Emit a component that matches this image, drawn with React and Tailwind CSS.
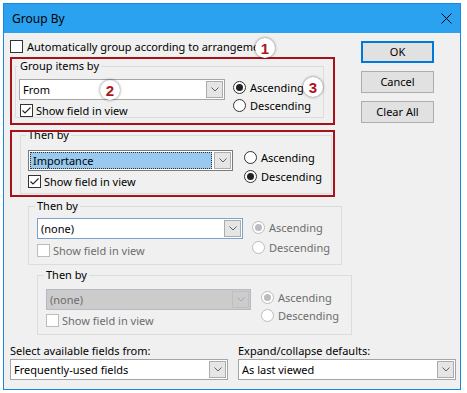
import React from "react";

const FONT = { fontFamily: '"Noto Sans", "Open Sans", sans-serif' };

function Check({ checked, disabled }) {
  return (
    <span
      className={`w-[13px] h-[13px] shrink-0 border bg-white flex items-center justify-center ${
        disabled ? "border-[#bcbcbc]" : "border-[#333333]"
      }`}
    >
      {checked && (
        <svg width="11" height="11" viewBox="0 0 11 11">
          <path d="M1.5 5.5 L4 8 L9.5 2.5" fill="none" stroke="#222222" strokeWidth="1.1" />
        </svg>
      )}
    </span>
  );
}

function Radio({ checked, disabled }) {
  return (
    <span
      className={`w-[13px] h-[13px] shrink-0 rounded-full border bg-white flex items-center justify-center ${
        disabled ? "border-[#bcbcbc]" : "border-[#333333]"
      }`}
    >
      {checked && (
        <span className={`w-[7px] h-[7px] rounded-full ${disabled ? "bg-[#bcbcbc]" : "bg-[#222222]"}`} />
      )}
    </span>
  );
}

function Chevron({ color = "#606060" }) {
  return (
    <svg width="8" height="5" viewBox="0 0 8 5">
      <path d="M0.5 0.5 L4 4 L7.5 0.5" fill="none" stroke={color} strokeWidth="1" />
    </svg>
  );
}

function Combo({ w, text, variant = "normal" }) {
  if (variant === "focus") {
    return (
      <div className={`${w} h-[21px] border border-[#7a7a7a] bg-white flex items-center`}>
        <div className="flex-1 h-[17px] ml-[1px] mr-[2px] bg-[#99c9ef] border border-dotted border-[#333333] flex items-center pl-[2px] leading-[14px] text-black">
          {text}
        </div>
        <div className="w-[17px] h-[17px] mr-[1px] border border-[#acacac] bg-[#e5e5e5] flex items-center justify-center">
          <Chevron />
        </div>
      </div>
    );
  }
  if (variant === "disabled") {
    return (
      <div className={`${w} h-[21px] border border-[#b3bcc6] bg-[#cccccc] flex items-center`}>
        <div className="flex-1 pl-[3px] leading-[14px] text-[#6d6d6d]">{text}</div>
        <div className="w-[17px] h-[17px] mr-[1px] border border-[#bfbfbf] bg-[#cccccc] flex items-center justify-center">
          <Chevron color="#a8a8a8" />
        </div>
      </div>
    );
  }
  const border = variant === "blue" ? "border-[#7aa2cf]" : "border-[#a5a5a5]";
  return (
    <div className={`${w} h-[21px] border ${border} bg-white flex items-center`}>
      <div className="flex-1 pl-[3px] leading-[14px] text-black">{text}</div>
      <div className="w-[17px] h-[17px] mr-[1px] border border-[#acacac] bg-[#e5e5e5] flex items-center justify-center">
        <Chevron />
      </div>
    </div>
  );
}

function CheckRow({ label, checked, disabled, cls }) {
  return (
    <div className={`h-[13px] flex items-center gap-[3px] ${cls || ""}`}>
      <Check checked={checked} disabled={disabled} />
      <span className={`leading-[14px] whitespace-nowrap ${disabled ? "text-[#6d6d6d]" : "text-black"}`}>{label}</span>
    </div>
  );
}

function RadioRow({ label, checked, disabled }) {
  return (
    <div className="h-[13px] flex items-center gap-[4px]">
      <Radio checked={checked} disabled={disabled} />
      <span className={`leading-[14px] whitespace-nowrap ${disabled ? "text-[#6d6d6d]" : "text-black"}`}>{label}</span>
    </div>
  );
}

function Button({ children, primary }) {
  return (
    <div
      className={`w-[73px] h-[22px] bg-[#e1e1e1] flex items-center justify-center leading-[14px] text-black ${
        primary ? "border-2 border-[#0078d7]" : "border border-[#adadad]"
      }`}
    >
      {children}
    </div>
  );
}

function Badge({ n, cls }) {
  return (
    <div
      className={`absolute ${cls} w-[20px] h-[20px] rounded-full bg-white shadow-[0_0_3px_rgba(0,0,0,0.55)] flex items-center justify-center text-[15px] font-bold leading-none text-[#ad151c]`}
      style={{ fontFamily: '"Liberation Sans", Arial, sans-serif' }}
    >
      {n}
    </div>
  );
}

export default function App() {
  return (
    <div className="relative w-[467px] h-[393px] bg-white overflow-hidden text-[11px]" style={FONT}>
      <div className="ml-[3px] mt-[3px] w-[458px] h-[387px] border border-[#1a86dc] flex flex-col">
        {/* Title bar */}
        <div className="h-[29px] bg-[#2aa2ef] flex items-center justify-between pl-[8px] pr-[8px]">
          <span className="text-[12px] leading-[16px] text-black">Group By</span>
          <svg width="11" height="11" viewBox="0 0 11 11">
            <path d="M0.5 0.5 L10.5 10.5 M10.5 0.5 L0.5 10.5" stroke="#000000" strokeWidth="1" />
          </svg>
        </div>
        {/* Body */}
        <div className="flex-1 bg-[#f0f0f0] flex flex-col">
          <div className="flex pt-[7px] pl-[6px]">
            {/* Left column */}
            <div className="w-[342px] flex flex-col">
              <div className="h-[13px] flex items-center gap-[4px]">
                <Check />
                <span className="leading-[14px] whitespace-nowrap text-black">
                  Automatically group according to arrangeme
                </span>
              </div>

              {/* Group items by */}
              <fieldset className="mt-[6px] ml-[5px] w-[309px] h-[59px] border border-[#dcdcdc]">
                <legend className="ml-[2px] px-[2px] leading-[14px] text-black">Group items by</legend>
                <div className="flex pl-[3px] mt-[6px]">
                  <div className="flex flex-col">
                    <Combo w="w-[206px]" text="From" />
                    <CheckRow label="Show field in view" checked cls="mt-[4px] ml-[1px]" />
                  </div>
                  <div className="flex flex-col ml-[8px] mt-[2px] gap-[5px]">
                    <RadioRow label="Ascending" checked />
                    <RadioRow label="Descending" />
                  </div>
                </div>
              </fieldset>

              {/* Then by 1 */}
              <fieldset className="mt-[10px] ml-[10px] w-[312px] h-[66px] border border-[#dcdcdc]">
                <legend className="ml-[5px] px-[2px] leading-[14px] text-black">Then by</legend>
                <div className="flex pl-[7px] mt-[8px]">
                  <div className="flex flex-col">
                    <Combo w="w-[205px]" text="Importance" variant="focus" />
                    <CheckRow label="Show field in view" checked cls="mt-[4px]" />
                  </div>
                  <div className="flex flex-col ml-[11px] mt-[1px] gap-[6px]">
                    <RadioRow label="Ascending" />
                    <RadioRow label="Descending" checked />
                  </div>
                </div>
              </fieldset>

              {/* Then by 2 */}
              <fieldset className="mt-[5px] ml-[18px] w-[314px] h-[66px] border border-[#dcdcdc]">
                <legend className="ml-[6px] px-[2px] leading-[14px] text-black">Then by</legend>
                <div className="flex pl-[8px] mt-[5px]">
                  <div className="flex flex-col">
                    <Combo w="w-[206px]" text="(none)" variant="blue" />
                    <CheckRow label="Show field in view" disabled cls="mt-[5px]" />
                  </div>
                  <div className="flex flex-col ml-[9px] mt-[3px] gap-[7px]">
                    <RadioRow label="Ascending" checked disabled />
                    <RadioRow label="Descending" disabled />
                  </div>
                </div>
              </fieldset>

              {/* Then by 3 */}
              <fieldset className="mt-[3px] ml-[27px] w-[315px] h-[67px] border border-[#dcdcdc]">
                <legend className="ml-[6px] px-[2px] leading-[14px] text-black">Then by</legend>
                <div className="flex pl-[8px] mt-[7px]">
                  <div className="flex flex-col">
                    <Combo w="w-[205px]" text="(none)" variant="disabled" />
                    <CheckRow label="Show field in view" disabled cls="mt-[4px]" />
                  </div>
                  <div className="flex flex-col ml-[10px] mt-[2px] gap-[5px]">
                    <RadioRow label="Ascending" checked disabled />
                    <RadioRow label="Descending" disabled />
                  </div>
                </div>
              </fieldset>
            </div>

            {/* Buttons */}
            <div className="ml-[9px] mt-[1px] flex flex-col gap-[8px]">
              <Button primary>OK</Button>
              <Button>Cancel</Button>
              <Button>Clear All</Button>
            </div>
          </div>

          {/* Bottom */}
          <div className="flex mt-[9px] pl-[6px] gap-[10px]">
            <div className="w-[218px] flex flex-col">
              <span className="h-[14px] leading-[14px] text-black">Select available fields from:</span>
              <div className="mt-[1px]">
                <Combo w="w-[218px]" text="Frequently-used fields" />
              </div>
            </div>
            <div className="w-[218px] flex flex-col">
              <span className="h-[14px] leading-[14px] text-black">Expand/collapse defaults:</span>
              <div className="mt-[1px]">
                <Combo w="w-[218px]" text="As last viewed" />
              </div>
            </div>
          </div>
        </div>
      </div>

      {/* Annotation overlays */}
      <div className="absolute left-[10px] top-[57px] w-[325px] h-[68px] border-2 border-[#a5121a] pointer-events-none" />
      <div className="absolute left-[10px] top-[130px] w-[325px] h-[67px] border-2 border-[#a5121a] pointer-events-none" />
      <Badge n="1" cls="left-[255px] top-[38px]" />
      <Badge n="2" cls="left-[100px] top-[80px]" />
      <Badge n="3" cls="left-[303px] top-[77px]" />
    </div>
  );
}
